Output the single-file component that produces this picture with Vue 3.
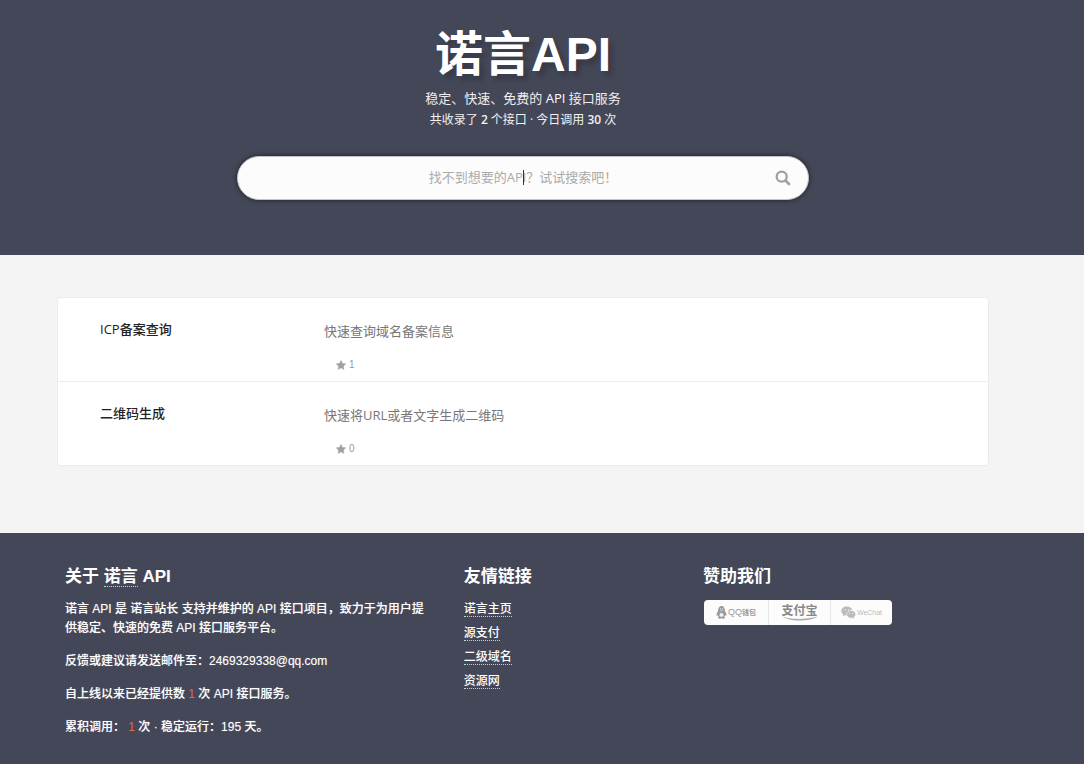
<script setup>
import { ref } from 'vue'

const keyword = ref('')
const apis = [
  { name: 'ICP备案查询', desc: '快速查询域名备案信息', stars: 1 },
  { name: '二维码生成', desc: '快速将URL或者文字生成二维码', stars: 0 }
]
const links = ['诺言主页', '源支付', '二级域名', '资源网']
</script>

<template>
  <div class="page">
    <header class="hero">
      <h1>诺言API</h1>
      <p class="slogan">稳定、快速、免费的 <span>API</span> 接口服务</p>
      <p class="stats">共收录了 <b>2</b> 个接口 · 今日调用 <b>30</b> 次</p>
      <form class="search" @submit.prevent>
        <input v-model="keyword" type="text" aria-label="搜索API" placeholder="找不到想要的API？试试搜索吧！" />
        <span v-if="!keyword" class="caret"></span>
        <button type="submit" aria-label="搜索">
          <svg viewBox="0 0 16 16" width="16" height="16" fill="none" stroke="#a0a0a0">
            <circle cx="6.7" cy="6.7" r="5" stroke-width="2.3" />
            <path d="M10.5 10.5 14 14" stroke-width="2.7" stroke-linecap="round" />
          </svg>
        </button>
      </form>
    </header>

    <main class="content">
      <ul class="list">
        <li v-for="api in apis" :key="api.name">
          <h2>{{ api.name }}</h2>
          <div>
            <p class="desc">{{ api.desc }}</p>
            <p class="stars">
              <svg viewBox="0 0 20 20" width="10" height="10" fill="#a0a0a0" stroke="#a0a0a0" stroke-linejoin="round">
                <path d="M10 .8l2.900 6 6.500.9-4.700 4.600 1.100 6.500-5.800-3.100-5.800 3.100 1.100-6.500L.6 7.700l6.500-.9z" />
              </svg>
              {{ api.stars }}
            </p>
          </div>
        </li>
      </ul>
    </main>

    <footer class="footer">
      <section class="about">
        <h3>关于 <a href="#">诺言</a> API</h3>
        <p>诺言 API 是 诺言站长 支持并维护的 API 接口项目，致力于为用户提供稳定、快速的免费 API 接口服务平台。</p>
        <p>反馈或建议请发送邮件至：2469329338@qq.com</p>
        <p>自上线以来已经提供数 <em>1</em> 次 API 接口服务。</p>
        <p>累积调用： <em>1</em> 次 · 稳定运行：195 天。</p>
      </section>
      <section>
        <h3>友情链接</h3>
        <ul class="links">
          <li v-for="link in links" :key="link"><a href="#">{{ link }}</a></li>
        </ul>
      </section>
      <section>
        <h3>赞助我们</h3>
        <div class="donate">
          <button type="button" aria-label="QQ钱包">
            <svg viewBox="0 0 11 13" width="11" height="13">
              <path fill="#999" d="M5.500 0C3.300 0 2.200 1.700 2.200 4c0 .8-.3 1.300-.7 2C.7 7.300.3 8.700.6 9.500c.3.4.8-.1 1.200-.6.2.9.6 1.500 1.100 2-.8.3-1 .8-.8 1.200.4.8 2.600.7 3.400.1.800.6 3 .7 3.400-.1.2-.4 0-.9-.8-1.200.5-.5.9-1.100 1.100-2 .4.5.9 1 1.200.6.3-.8-.1-2.200-.9-3.500-.4-.7-.7-1.200-.7-2C8.800 1.700 7.700 0 5.500 0z" />
              <ellipse cx="5.500" cy="8.900" rx="2.100" ry="1.900" fill="#f0f0f0" />
              <path fill="#ccc" d="M3.600 4.700q1.900-.7 3.800 0-1.900 1.400-3.800 0z" />
              <circle cx="4.600" cy="2.900" r=".6" fill="#eee" />
              <circle cx="6.500" cy="2.900" r=".6" fill="#eee" />
            </svg>
            <span class="qq">QQ<small>钱包</small></span>
          </button>
          <button type="button" class="alipay" aria-label="支付宝">
            <span>支付宝</span>
            <svg viewBox="0 0 38 6" width="38" height="6">
              <path d="M1 1C8 5 25 4.500 37 1.500 28 7 8 7 1 1z" fill="#aaa" />
            </svg>
          </button>
          <button type="button" aria-label="WeChat">
            <svg viewBox="0 0 15 13" width="15" height="13">
              <path fill="#bbb" d="M5.800.5C2.700.5.3 2.500.3 5c0 1.500.8 2.700 2.100 3.500l-.6 1.800 2.200-1.100 1.800.2C5.300 6.500 7.800 4 11.200 4 10.700 2 8.500.5 5.800.5z" />
              <path fill="#bbb" stroke="#fcfcfc" stroke-width=".5" d="M10.200 4.400c-2.600 0-4.600 1.700-4.600 3.900s2 3.900 4.600 3.900l1.500-.2 1.700.9-.5-1.500c1.100-.7 1.800-1.800 1.800-3.100 0-2.200-2-3.900-4.500-3.900z" />
              <g fill="#fcfcfc">
                <circle cx="4" cy="3.800" r=".6" /><circle cx="7.400" cy="3.800" r=".6" />
                <circle cx="8.700" cy="7.300" r=".5" /><circle cx="11.500" cy="7.300" r=".5" />
              </g>
            </svg>
            <span class="wechat">WeChat</span>
          </button>
        </div>
      </section>
    </footer>
  </div>
</template>

<style>
body {
  margin: 0;
  background: #444757;
}
</style>

<style scoped>
.page {
  font-family: "Liberation Sans", "Noto Sans CJK SC", sans-serif;
  font-size: 13px;
  color: #fff;
}
h1, h2, h3, p, ul {
  margin: 0;
  padding: 0;
}
ul {
  list-style: none;
}
.hero {
  display: flex;
  flex-direction: column;
  align-items: center;
  padding: 22px 38px 55px 0;
  background: #444757;
  text-align: center;
}
h1 {
  font-size: 48px;
  line-height: 66px;
  text-shadow: 4px 5px 5px rgba(0, 0, 0, 0.2);
}
.slogan {
  line-height: 20px;
  color: #eee;
}
.slogan span {
  color: #fff;
}
.slogan,
.stats {
  font-family: "Open Sans", "Noto Sans CJK SC", sans-serif;
}
.stats {
  font-size: 12px;
  line-height: 24px;
  color: #f2f2f2;
}
.stats b {
  font-weight: 600;
}
.search {
  position: relative;
  display: flex;
  box-sizing: border-box;
  width: 100%;
  max-width: 572px;
  height: 44px;
  margin-top: 24px;
  border: 1px solid #c3c3c9;
  border-radius: 22px;
  background: #fcfcfc;
  box-shadow: 0 0 5px rgba(0, 0, 0, 0.6);
}
.search input {
  flex: 1;
  min-width: 0;
  padding: 0 50px 2px;
  border: 0;
  outline: 0;
  background: none;
  font: 13px "Open Sans", "Noto Sans CJK SC", sans-serif;
  text-align: center;
  color: #555;
}
.search input::placeholder {
  color: #aaa;
  opacity: 1;
}
.caret {
  position: absolute;
  left: 50%;
  top: 13px;
  width: 1px;
  height: 15px;
  background: #333;
}
.search button {
  position: absolute;
  right: 17px;
  top: 13px;
  display: flex;
  padding: 0;
  border: 0;
  background: none;
}
.content {
  padding: 42px 95px 67px 57px;
  background: #f4f4f4;
}
.list {
  border: 1px solid #ececec;
  border-radius: 3px;
  background: #fff;
}
.list li {
  display: grid;
  grid-template-columns: 224px 1fr;
  padding: 21px 42px 7px;
}
.list li + li {
  border-top: 1px solid #ececec;
}
h2 {
  font: 500 13px/20px "Open Sans", "Noto Sans CJK SC", sans-serif;
  color: #222;
}
.desc {
  padding-top: 2px;
  font-family: "Open Sans", "Noto Sans CJK SC", sans-serif;
  line-height: 20px;
  color: #777;
}
.stars {
  display: flex;
  align-items: center;
  gap: 3px;
  margin: 14px 0 0 12px;
  font-size: 10px;
  line-height: 19px;
  color: #999;
}
.footer {
  display: grid;
  grid-template-columns: 5fr 3fr 4fr;
  padding: 33px 62px 27px 65px;
  background: #444757;
}
.footer a {
  display: inline-block;
  border-bottom: 1px dotted #a5e8b5;
  color: inherit;
  text-decoration: none;
}
h3 {
  margin-bottom: 12px;
  font-size: 17px;
  line-height: 22px;
}
h3 a {
  line-height: 18px;
}
.about {
  padding-right: 32px;
}
.about p {
  margin-bottom: 14px;
  font-size: 12px;
  font-weight: 500;
  line-height: 19px;
  text-shadow: 0 0 1px rgba(255, 255, 255, 0.4);
}
.about p:last-child {
  margin-bottom: 0;
}
.about em {
  font-style: normal;
  color: #e0694a;
  text-shadow: none;
}
.links {
  padding-top: 2px;
}
.links li {
  height: 24px;
  font-size: 12px;
  font-weight: 500;
}
.links a {
  line-height: 14px;
}
.donate {
  display: inline-grid;
  grid-template-columns: 64px 62px 62px;
  height: 25px;
  margin-left: 1px;
  border-radius: 4px;
  overflow: hidden;
  background: #fcfcfc;
}
.donate button {
  display: flex;
  align-items: center;
  justify-content: center;
  gap: 1px;
  padding: 0;
  border: 0;
  background: none;
  font-family: "Liberation Sans", "Noto Sans CJK SC", sans-serif;
  color: #999;
}
.donate button + button {
  border-left: 1px solid #e6e6e6;
}
.qq {
  font-size: 9px;
  line-height: 12px;
}
.qq small {
  font-size: 7px;
  font-weight: 700;
}
.donate .alipay {
  flex-direction: column;
  gap: 0;
  color: #888;
}
.alipay span {
  font-size: 12px;
  font-weight: 700;
  line-height: 12px;
}
.alipay svg {
  margin-top: -2px;
}
.donate .wechat {
  font-size: 7px;
  color: #bbb;
}
</style>
